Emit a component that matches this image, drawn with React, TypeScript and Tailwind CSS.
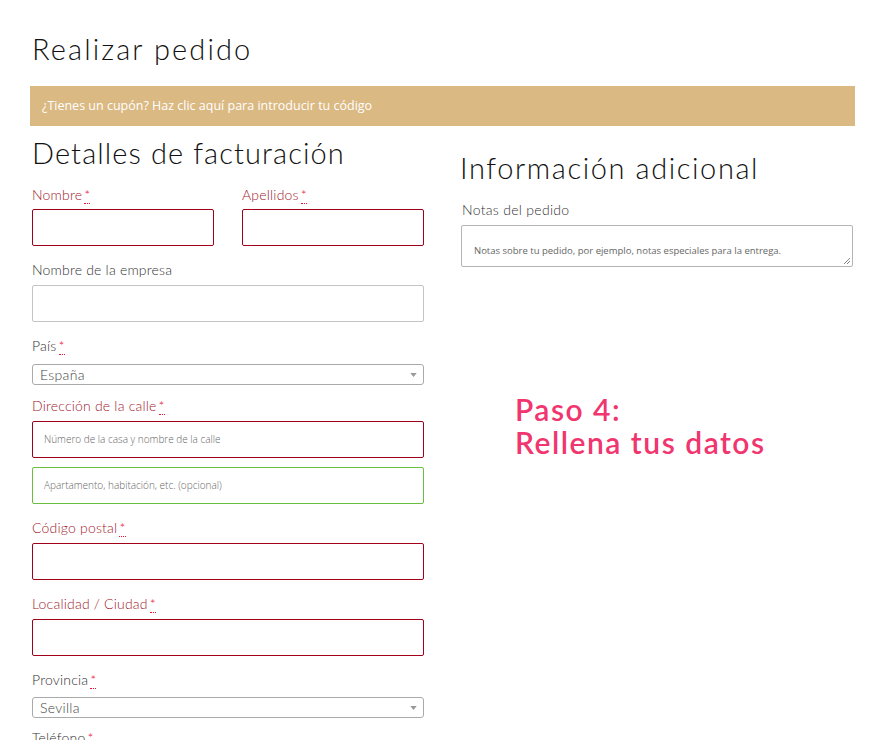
import React from 'react';

const heading = "font-['Lato',sans-serif] font-light text-[#111]";
const labelRed = "text-[#a0192c]";

const Req: React.FC = () => (
  <abbr className="ml-[2px] text-[#ee1133] no-underline border-b border-dotted border-[#ee1133] leading-none" title="obligatorio">*</abbr>
);

const Label: React.FC<{ text: string; required?: boolean; error?: boolean }> = ({ text, required, error }) => (
  <label className={`block text-[14px] leading-[18px] tracking-[0.2px] ${error ? labelRed : 'text-[#333]'}`}>
    {text}
    {required && <Req />}
  </label>
);

const Input: React.FC<{ placeholder?: string; tone?: 'red' | 'green' | 'gray' }> = ({ placeholder, tone = 'red' }) => {
  const border =
    tone === 'red' ? 'border-[#a0001a]' : tone === 'green' ? 'border-[#69bf3f]' : 'border-[#c4c4c4]';
  return (
    <div className={`h-[37px] w-full border ${border} rounded-[2px] bg-white flex items-center px-[11px]`}>
      {placeholder && (
        <span className="font-['Open_Sans',sans-serif] text-[10px] text-[#666]">{placeholder}</span>
      )}
    </div>
  );
};

const Select: React.FC<{ value: string }> = ({ value }) => (
  <div className="h-[21px] w-full border border-[#aaa] rounded-[3px] bg-white flex items-center justify-between pl-[7px] pr-[6px]">
    <span className="text-[14px] text-[#444] tracking-[0.3px]">{value}</span>
    <svg width="7" height="4" viewBox="0 0 8 5">
      <path d="M0 0h8L4 5z" fill="#999" />
    </svg>
  </div>
);

const App: React.FC = () => {
  return (
    <div className="w-[874px] h-[740px] overflow-hidden bg-white font-['Lato',sans-serif] font-light text-[#333]">
      <div className="pl-[30px] pr-[19px] pt-[30px]">
        <h1 className={`${heading} text-[29px] leading-[38px] pl-[2px] tracking-[2.1px]`}>Realizar pedido</h1>
        <div className="mt-[18px] h-[40px] bg-[#dbb983] flex items-center px-[12px]">
          <span className="font-['Open_Sans',sans-serif] font-normal text-[12.5px] text-white">
            ¿Tienes un cupón? Haz clic aquí para introducir tu código
          </span>
        </div>

        <div className="flex mt-[10px]">
          {/* billing */}
          <div className="w-[392px] ml-[2px]">
            <h3 className={`${heading} text-[29px] leading-[34px] tracking-[1.1px]`}>Detalles de facturación</h3>
            <div className="flex gap-[28px] mt-[16px]">
              <div className="flex-1">
                <Label text="Nombre" required error />
                <div className="mt-[5px]"><Input /></div>
              </div>
              <div className="flex-1">
                <Label text="Apellidos" required error />
                <div className="mt-[5px]"><Input /></div>
              </div>
            </div>

            <div className="mt-[15px]">
              <Label text="Nombre de la empresa" />
              <div className="mt-[6px]"><Input tone="gray" /></div>
            </div>

            <div className="mt-[15px]">
              <Label text="País" required />
              <div className="mt-[9px]"><Select value="España" /></div>
            </div>

            <div className="mt-[12px]">
              <Label text="Dirección de la calle" required error />
              <div className="mt-[6px]"><Input placeholder="Número de la casa y nombre de la calle" /></div>
              <div className="mt-[9px]"><Input tone="green" placeholder="Apartamento, habitación, etc. (opcional)" /></div>
            </div>

            <div className="mt-[15px]">
              <Label text="Código postal" required error />
              <div className="mt-[6px]"><Input /></div>
            </div>

            <div className="mt-[15px]">
              <Label text="Localidad / Ciudad" required error />
              <div className="mt-[6px]"><Input /></div>
            </div>

            <div className="mt-[15px]">
              <Label text="Provincia" required />
              <div className="mt-[8px]"><Select value="Sevilla" /></div>
            </div>

            <div className="mt-[11px]">
              <Label text="Teléfono" required />
            </div>
          </div>

          {/* additional */}
          <div className="ml-[37px] flex-1 pr-[2px]">
            <h3 className={`${heading} text-[29px] leading-[34px] tracking-[1.6px] mt-[15px] -ml-[1px]`}>Información adicional</h3>
            <div className="mt-[16px]">
              <label className="block text-[14px] leading-[18px] text-[#333] pl-[1px] tracking-[0.3px]">Notas del pedido</label>
              <div className="relative mt-[6px] h-[42px] border border-[#b5b5b5] rounded-[2px] px-[12px] pt-[10px]">
                <span className="font-['Open_Sans',sans-serif] text-[9.5px] text-[#666] font-normal">
                  Notas sobre tu pedido, por ejemplo, notas especiales para la entrega.
                </span>
                <svg className="absolute right-[1px] bottom-[1px]" width="8" height="8" viewBox="0 0 8 8">
                  <path d="M7 1L1 7M7 4L4 7" stroke="#888" strokeWidth="1" />
                </svg>
              </div>
            </div>

            <div className="mt-[126px] ml-[54px] font-['Lato',sans-serif] font-semibold text-[30px] leading-[33px] text-[#f0356f] tracking-[1.5px]">
              <div>Paso 4:</div>
              <div>Rellena tus datos</div>
            </div>
          </div>
        </div>
      </div>
    </div>
  );
};

export default App;
